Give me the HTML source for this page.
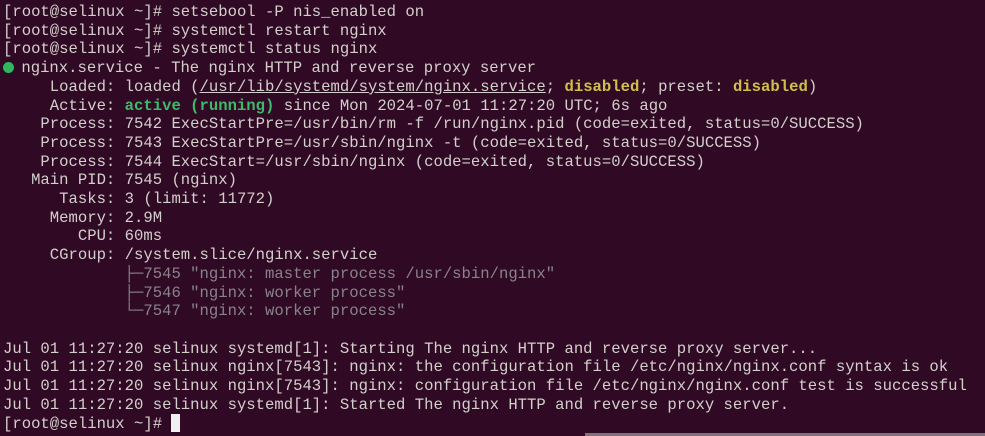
<!DOCTYPE html>
<html><head><meta charset="utf-8"><style>
html,body{margin:0;padding:0;}
body{width:985px;height:436px;background:#300a24;overflow:hidden;position:relative;}
pre{margin:0;position:absolute;left:3px;top:3px;font-family:"Liberation Mono","DejaVu Sans Mono",monospace;font-size:15.6px;line-height:18.7px;color:#d3d0cc;white-space:pre;}
.g{color:#3fb86a;font-weight:bold}
.y{color:#cfc04a;font-weight:bold}
.u{text-decoration:underline}
.d{color:#88838a}
.dot{display:inline-block;width:11px;height:11px;border-radius:50%;background:#2fb65f;vertical-align:-1px;margin-right:-2px}
.cur{display:inline-block;width:9px;height:18px;background:#f0f0f0;vertical-align:-4px}
.strip{position:absolute;left:585px;top:433px;width:400px;height:3px;background:#7d7479}
</style></head><body>
<pre>[root@selinux ~]# setsebool -P nis_enabled on
[root@selinux ~]# systemctl restart nginx
[root@selinux ~]# systemctl status nginx
<span class="dot"></span> nginx.service - The nginx HTTP and reverse proxy server
     Loaded: loaded (<span class="u">/usr/lib/systemd/system/nginx.service</span>; <span class="y">disabled</span>; preset: <span class="y">disabled</span>)
     Active: <span class="g">active (running)</span> since Mon 2024-07-01 11:27:20 UTC; 6s ago
    Process: 7542 ExecStartPre=/usr/bin/rm -f /run/nginx.pid (code=exited, status=0/SUCCESS)
    Process: 7543 ExecStartPre=/usr/sbin/nginx -t (code=exited, status=0/SUCCESS)
    Process: 7544 ExecStart=/usr/sbin/nginx (code=exited, status=0/SUCCESS)
   Main PID: 7545 (nginx)
      Tasks: 3 (limit: 11772)
     Memory: 2.9M
        CPU: 60ms
     CGroup: /system.slice/nginx.service
             <span class="d">├─7545 "nginx: master process /usr/sbin/nginx"</span>
             <span class="d">├─7546 "nginx: worker process"</span>
             <span class="d">└─7547 "nginx: worker process"</span>

Jul 01 11:27:20 selinux systemd[1]: Starting The nginx HTTP and reverse proxy server...
Jul 01 11:27:20 selinux nginx[7543]: nginx: the configuration file /etc/nginx/nginx.conf syntax is ok
Jul 01 11:27:20 selinux nginx[7543]: nginx: configuration file /etc/nginx/nginx.conf test is successful
Jul 01 11:27:20 selinux systemd[1]: Started The nginx HTTP and reverse proxy server.
[root@selinux ~]# <span class="cur"></span></pre>
<div class="strip"></div>
</body></html>
